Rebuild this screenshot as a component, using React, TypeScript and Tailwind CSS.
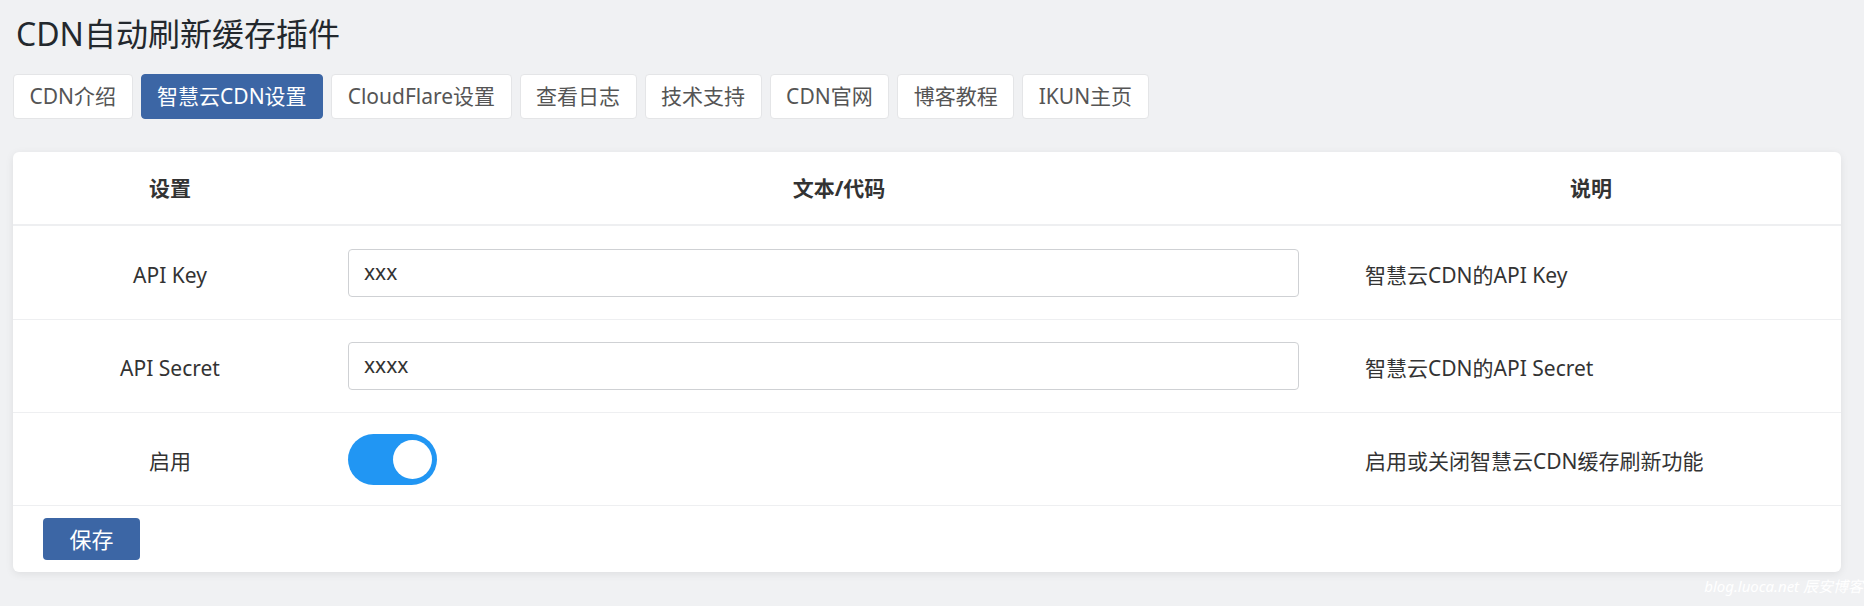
import React from "react";

const tabs = [
  "CDN介绍",
  "智慧云CDN设置",
  "CloudFlare设置",
  "查看日志",
  "技术支持",
  "CDN官网",
  "博客教程",
  "IKUN主页",
];

const font = {
  fontFamily: '"Noto Sans", "Noto Sans CJK SC", sans-serif',
};

export default function App() {
  return (
    <div
      className="relative min-h-[606px] w-full bg-[#f0f1f3] pl-[13px] pr-[23px] pt-[14px] text-[#333]"
      style={font}
    >
      <h1 className="h-[40px] pl-[3px] text-[32px] leading-[40px] font-normal text-[#23282d]">
        CDN自动刷新缓存插件
      </h1>

      <div className="mt-[20px] flex gap-[8px]">
        {tabs.map((t, i) => (
          <div
            key={t}
            className={
              i === 1
                ? "flex h-[45px] items-center rounded-[4px] border border-[#3c66a5] bg-[#3c66a5] px-[15.5px] text-[21px] text-white"
                : "flex h-[45px] items-center rounded-[4px] border border-[#e4e5e7] bg-white px-[15.5px] text-[21px] text-[#555]"
            }
          >
            {t}
          </div>
        ))}
      </div>

      <div className="mt-[33px] overflow-hidden rounded-[6px] bg-white shadow-[0_2px_8px_rgba(0,0,0,0.08)]">
        <div className="grid h-[74px] grid-cols-[314px_1024px_1fr] items-center border-b-2 border-[#eeeff1] text-[21px] font-bold text-[#333]">
          <div className="pt-[2px] text-center">设置</div>
          <div className="pt-[2px] text-center">文本/代码</div>
          <div className="pr-[10px] pt-[2px] text-center">说明</div>
        </div>

        <div className="grid h-[94px] grid-cols-[314px_1024px_1fr] items-center border-b border-[#eeeff1] text-[21px]">
          <div className="pt-[6px] text-center">API Key</div>
          <div className="pl-[21px]">
            <div className="flex h-[48px] w-[951px] items-center rounded-[4px] border border-[#cfd1d4] px-[15px]">
              xxx
            </div>
          </div>
          <div className="pl-[14px] pt-[6px]">智慧云CDN的API Key</div>
        </div>

        <div className="grid h-[93px] grid-cols-[314px_1024px_1fr] items-center border-b border-[#eeeff1] text-[21px]">
          <div className="pt-[6px] text-center">API Secret</div>
          <div className="pl-[21px]">
            <div className="flex h-[48px] w-[951px] items-center rounded-[4px] border border-[#cfd1d4] px-[15px]">
              xxxx
            </div>
          </div>
          <div className="pl-[14px] pt-[6px]">智慧云CDN的API Secret</div>
        </div>

        <div className="grid h-[93px] grid-cols-[314px_1024px_1fr] items-center border-b border-[#eeeff1] text-[21px]">
          <div className="pt-[5px] text-center">启用</div>
          <div className="pl-[21px]">
            <div className="flex h-[51px] w-[89px] items-center justify-end rounded-full bg-[#2196f3] pr-[5px]">
              <div className="h-[39px] w-[39px] rounded-full bg-white" />
            </div>
          </div>
          <div className="pl-[14px] pt-[5px]">启用或关闭智慧云CDN缓存刷新功能</div>
        </div>

        <div className="flex h-[66px] items-center pl-[30px]">
          <div className="flex h-[42px] w-[97px] items-center justify-center rounded-[4px] bg-[#3c66a5] text-[22px] text-white">
            保存
          </div>
        </div>
      </div>

      <div className="absolute bottom-[10px] right-[1px] text-[15px] leading-[20px] italic text-white">
        blog.luoca.net 辰安博客
      </div>
    </div>
  );
}
